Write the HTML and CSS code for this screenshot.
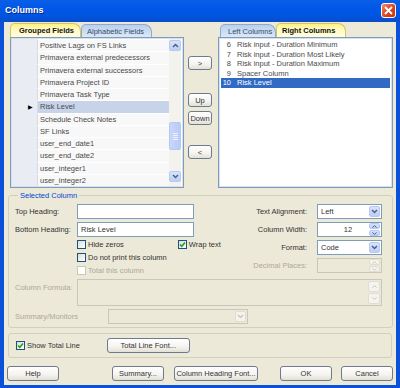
FILE: index.html
```html
<!DOCTYPE html>
<html lang="en">
  <head>
    <meta charset="UTF-8" />
    <title>Columns</title>
    <link rel="stylesheet" href="styles.css">
  </head>

  <body>
    <div class="window">
      <div class="titlebar">
        <span class="title">Columns</span>
        <span class="close">
          <svg width="9" height="9" viewBox="0 0 9 9"><path d="M1 1 L8 8 M8 1 L1 8" stroke="#fff" stroke-width="1.8" /></svg>
        </span>
      </div>

      <div class="dialog">
        <div class="top-row">
          <!-- available fields -->
          <div class="panel left-panel">
            <div class="tabs">
              <span class="tab active grouped">Grouped Fields</span>
              <span class="tab alpha">Alphabetic Fields</span>
            </div>
            <div class="listbox field-list">
              <div class="rows">
                <div class="row"><span class="mark"></span><span class="name">Positive Lags on FS Links</span></div>
                <div class="row"><span class="mark"></span><span class="name">Primavera external predecessors</span></div>
                <div class="row"><span class="mark"></span><span class="name">Primavera external successors</span></div>
                <div class="row"><span class="mark"></span><span class="name">Primavera Project ID</span></div>
                <div class="row"><span class="mark"></span><span class="name">Primavera Task Type</span></div>
                <div class="row current"><span class="mark">&#9654;</span><span class="name">Risk Level</span></div>
                <div class="row"><span class="mark"></span><span class="name">Schedule Check Notes</span></div>
                <div class="row"><span class="mark"></span><span class="name">SF Links</span></div>
                <div class="row"><span class="mark"></span><span class="name">user_end_date1</span></div>
                <div class="row"><span class="mark"></span><span class="name">user_end_date2</span></div>
                <div class="row"><span class="mark"></span><span class="name">user_integer1</span></div>
                <div class="row"><span class="mark"></span><span class="name">user_integer2</span></div>
              </div>
              <div class="vscroll">
                <span class="sbtn">
                  <svg width="7" height="5" viewBox="0 0 7 5"><path d="M1 4 L3.5 1.5 L6 4" stroke="#4d6185" stroke-width="1.5" fill="none" /></svg>
                </span>
                <span class="thumb"><i></i><i></i><i></i><i></i></span>
                <span class="sbtn">
                  <svg width="7" height="5" viewBox="0 0 7 5"><path d="M1 1 L3.5 3.5 L6 1" stroke="#4d6185" stroke-width="1.5" fill="none" /></svg>
                </span>
              </div>
            </div>
          </div>

          <!-- move buttons -->
          <div class="move-buttons">
            <button class="btn add">&gt;</button>
            <button class="btn up">Up</button>
            <button class="btn down">Down</button>
            <button class="btn remove">&lt;</button>
          </div>

          <!-- chosen columns -->
          <div class="panel right-panel">
            <div class="tabs">
              <span class="tab left-cols">Left Columns</span>
              <span class="tab active right-cols">Right Columns</span>
            </div>
            <div class="listbox column-list">
              <div class="col-row"><span class="num">6</span>Risk input - Duration Minimum</div>
              <div class="col-row"><span class="num">7</span>Risk input - Duration Most Likely</div>
              <div class="col-row"><span class="num">8</span>Risk input - Duration Maximum</div>
              <div class="col-row"><span class="num">9</span>Spacer Column</div>
              <div class="col-row selected"><span class="num">10</span>Risk Level</div>
            </div>
          </div>
        </div>

        <fieldset class="group selected-column">
          <legend>Selected Column</legend>
          <div class="fields">
            <div class="left-fields">
              <div class="field">
                <label>Top Heading:</label>
                <span class="input wide"></span>
              </div>
              <div class="field">
                <label>Bottom Heading:</label>
                <span class="input wide">Risk Level</span>
              </div>
              <div class="checks">
                <div class="check-line">
                  <span class="check"><span class="cb"></span>Hide zeros</span>
                  <span class="check wrap"><span class="cb checked"><svg width="7" height="7" viewBox="0 0 7 7"><path d="M1 3.5 L2.8 5.3 L6 1.5" stroke="#21a121" stroke-width="1.6" fill="none" /></svg></span>Wrap text</span>
                </div>
                <div class="check-line">
                  <span class="check"><span class="cb"></span>Do not print this column</span>
                </div>
                <div class="check-line">
                  <span class="check disabled"><span class="cb"></span>Total this column</span>
                </div>
              </div>
            </div>

            <div class="right-fields">
              <div class="field">
                <label>Text Alignment:</label>
                <span class="input combo">Left<span class="drop"><svg width="7" height="5" viewBox="0 0 7 5"><path d="M1 1 L3.5 3.5 L6 1" stroke="#4d6185" stroke-width="1.5" fill="none" /></svg></span></span>
              </div>
              <div class="field">
                <label>Column Width:</label>
                <span class="input combo spin"><span class="value">12</span><span class="spinner"><span class="sp"><svg width="5" height="3" viewBox="0 0 5 3"><path d="M0.5 2.6 L2.5 0.6 L4.5 2.6" stroke="#4d6185" stroke-width="1" fill="none" /></svg></span><span class="sp"><svg width="5" height="3" viewBox="0 0 5 3"><path d="M0.5 0.4 L2.5 2.4 L4.5 0.4" stroke="#4d6185" stroke-width="1" fill="none" /></svg></span></span></span>
              </div>
              <div class="field">
                <label>Format:</label>
                <span class="input combo">Code<span class="drop"><svg width="7" height="5" viewBox="0 0 7 5"><path d="M1 1 L3.5 3.5 L6 1" stroke="#4d6185" stroke-width="1.5" fill="none" /></svg></span></span>
              </div>
              <div class="field disabled">
                <label>Decimal Places:</label>
                <span class="input combo spin off"><span class="value"></span><span class="spinner"><span class="sp"><svg width="5" height="3" viewBox="0 0 5 3"><path d="M0.5 2.6 L2.5 0.6 L4.5 2.6" stroke="#c9c7ba" stroke-width="1" fill="none" /></svg></span><span class="sp"><svg width="5" height="3" viewBox="0 0 5 3"><path d="M0.5 0.4 L2.5 2.4 L4.5 0.4" stroke="#c9c7ba" stroke-width="1" fill="none" /></svg></span></span></span>
              </div>
            </div>
          </div>

          <div class="field formula disabled">
            <label>Column Formula:</label>
            <span class="input area off">
              <span class="area-scroll">
                <span class="sp"><svg width="5" height="3" viewBox="0 0 5 3"><path d="M0.5 2.6 L2.5 0.6 L4.5 2.6" stroke="#c9c7ba" stroke-width="1" fill="none" /></svg></span>
                <span class="sp"><svg width="5" height="3" viewBox="0 0 5 3"><path d="M0.5 0.4 L2.5 2.4 L4.5 0.4" stroke="#c9c7ba" stroke-width="1" fill="none" /></svg></span>
              </span>
            </span>
          </div>

          <div class="field summary disabled">
            <label>Summary/Monitors</label>
            <span class="input combo off monitors"><span class="drop"><svg width="7" height="5" viewBox="0 0 7 5"><path d="M1 1 L3.5 3.5 L6 1" stroke="#c9c7ba" stroke-width="1.5" fill="none" /></svg></span></span>
          </div>
        </fieldset>

        <div class="group total-line">
          <span class="check"><span class="cb checked"><svg width="7" height="7" viewBox="0 0 7 7"><path d="M1 3.5 L2.8 5.3 L6 1.5" stroke="#21a121" stroke-width="1.6" fill="none" /></svg></span>Show Total Line</span>
          <button class="btn total-font">Total Line Font...</button>
        </div>

        <div class="button-row">
          <button class="btn help">Help</button>
          <button class="btn summary-btn">Summary...</button>
          <button class="btn heading-font">Column Heading Font...</button>
          <button class="btn ok">OK</button>
          <button class="btn cancel">Cancel</button>
        </div>
      </div>
    </div>
  </body>
</html>
```

FILE: styles.css
```css
* {
  margin: 0;
  padding: 0;
  box-sizing: border-box;
}

body {
  font-family: "Liberation Sans", Arial, sans-serif;
  font-size: 7.5px;
  color: #333;
  background: #fff;
}

.window {
  width: 400px;
  height: 388px;
  display: flex;
  flex-direction: column;
}

/* title bar */
.titlebar {
  height: 22px;
  display: flex;
  align-items: center;
  justify-content: space-between;
  padding: 0 4px 2px 5px;
  background: linear-gradient(to bottom, #0a5fe8 0%, #0058e6 40%, #0054e0 75%, #0a4cc8 100%);
}

.title {
  color: #fff;
  font-weight: bold;
  font-size: 9px;
  text-shadow: 1px 1px 0 #0a2a8a;
}

.close {
  width: 15px;
  height: 15px;
  display: flex;
  align-items: center;
  justify-content: center;
  border: 1px solid #fff;
  border-radius: 3px;
  background: linear-gradient(135deg, #f0886a, #d8401a 60%, #c83810);
}

/* dialog body */
.dialog {
  flex: 1;
  background: #ece9d8;
  border: solid #0a50d8;
  border-width: 0 4px 3px 4px;
  padding: 1px 3px 0 3px;
  display: flex;
  flex-direction: column;
}

.top-row {
  display: flex;
  height: 165px;
  margin-left: 3px;
}

.panel {
  display: flex;
  flex-direction: column;
}

.left-panel {
  width: 174px;
}

.right-panel {
  width: 175px;
  margin-left: 6px;
}

.tabs {
  height: 14px;
  display: flex;
  align-items: flex-end;
}

.tab {
  height: 13px;
  display: flex;
  align-items: center;
  border: 1px solid #8eaad0;
  border-bottom: none;
  border-radius: 5px 8px 0 0;
  background: linear-gradient(to bottom, #b8d0ee, #dce8f6);
  color: #3a4a6a;
}

.tab.active {
  height: 14px;
  font-weight: bold;
  color: #111;
  border-color: #d8c458;
  background: linear-gradient(to bottom, #fff080, #fffac0 40%, #fffde0);
}

.grouped {
  width: 71px;
  padding-left: 8px;
}

.alpha {
  width: 71px;
  padding-left: 5px;
}

.left-cols {
  width: 56px;
  margin-left: 2px;
  padding-left: 7px;
}

.right-cols {
  width: 70px;
  padding-left: 5px;
}

.listbox {
  height: 151px;
  border: 1px solid #7f9db9;
  box-shadow: inset 0 0 0 1px #d5e1f1;
  background: #fff;
}

/* grouped field grid */
.field-list {
  display: flex;
  padding: 1px 2px 1px 1px;
}

.rows {
  flex: 1;
  display: flex;
  flex-direction: column;
  background: #e9ecf2;
}

.row {
  flex: 1;
  display: flex;
  align-items: center;
}

.mark {
  width: 25px;
  height: 100%;
  display: flex;
  align-items: center;
  justify-content: flex-end;
  padding-right: 4px;
  font-size: 6px;
  color: #000;
}

.name {
  flex: 1;
  height: 100%;
  display: flex;
  align-items: center;
  padding-left: 2px;
  background: #f8f8f8;
  border-top: 1px solid #fff;
  border-left: 1px solid #d8dbe2;
  color: #4a4a4a;
}

.row.current .name {
  background: #c6d3e8;
}

.vscroll {
  width: 12px;
  display: flex;
  flex-direction: column;
  background: #f3f2ec;
  padding-top: 1px;
}

.sbtn {
  height: 11px;
  display: flex;
  align-items: center;
  justify-content: center;
  border: 1px solid #b7c9f1;
  border-radius: 2px;
  background: linear-gradient(to bottom, #d8e3fd, #bccef7);
}

.thumb {
  height: 28px;
  margin: 71px 0 21px;
  display: flex;
  flex-direction: column;
  align-items: center;
  justify-content: center;
  gap: 1px;
  border: 1px solid #b7c9f1;
  border-radius: 2px;
  background: linear-gradient(to right, #c8d7fb, #b8cbf6);
}

.thumb i {
  width: 5px;
  height: 1px;
  background: #eef2fd;
}

/* middle buttons */
.move-buttons {
  width: 24px;
  margin-left: 4px;
  display: flex;
  flex-direction: column;
  padding-top: 33px;
}

.btn {
  font-family: inherit;
  font-size: 7.5px;
  color: #333;
  height: 15px;
  border: 1px solid #6d7b8d;
  border-radius: 3px;
  background: linear-gradient(to bottom, #ffffff, #f4f3ee 60%, #e2e0d6);
}

.move-buttons .btn {
  height: 14px;
}

.up {
  margin-top: 23px;
}

.down {
  margin-top: 4px;
}

.remove {
  margin-top: 20px;
}

/* chosen columns */
.column-list {
  padding: 2px 2px 0 2px;
}

.col-row {
  height: 9.5px;
  line-height: 9.5px;
  display: flex;
  color: #4a4a4a;
}

.num {
  width: 10px;
  text-align: right;
  margin-right: 6px;
}

.col-row.selected {
  background: #316ac5;
  color: #fff;
}

/* selected column group */
.group {
  border: 1px solid #d0d0bf;
  border-radius: 3px;
  margin: 0 1px;
}

.selected-column {
  margin-top: 3px;
  padding: 4px 10px 3px 6px;
}

legend {
  color: #0046d5;
  padding: 0 2px;
  margin-left: 3px;
  line-height: 9px;
}

.fields {
  display: flex;
  justify-content: space-between;
}

.field {
  display: flex;
  align-items: center;
  height: 15px;
}

.field + .field {
  margin-top: 3px;
}

.left-fields label {
  width: 62px;
}

.input {
  height: 15px;
  border: 1px solid #7f9db9;
  background: #fff;
  display: flex;
  align-items: center;
  padding-left: 3px;
}

.input.wide {
  width: 117px;
}

.checks {
  margin-left: 62px;
  margin-top: 1px;
}

.check-line {
  height: 13px;
  display: flex;
  align-items: center;
}

.check {
  display: flex;
  align-items: center;
}

.check.wrap {
  margin-left: 54px;
}

.cb {
  width: 9px;
  height: 9px;
  margin-right: 2px;
  border: 1px solid #1c5180;
  background: linear-gradient(135deg, #dcdcd5, #fff);
  display: flex;
  align-items: center;
  justify-content: center;
}

.disabled {
  color: #aca899;
}

.check.disabled .cb {
  border-color: #cac8bb;
  background: #fff;
}

.right-fields label {
  margin-right: 10px;
  text-align: right;
}

.right-fields .field {
  justify-content: flex-end;
}

.combo {
  width: 65px;
  justify-content: space-between;
  padding-right: 1px;
}

.drop {
  width: 11px;
  height: 11px;
  display: flex;
  align-items: center;
  justify-content: center;
  border: 1px solid #b7c9f1;
  border-radius: 2px;
  background: linear-gradient(to bottom, #d8e3fd, #bccef7);
}

.spin .value {
  flex: 1;
  text-align: center;
  padding-left: 6px;
}

.spinner {
  width: 11px;
  height: 13px;
  display: flex;
  flex-direction: column;
  gap: 1px;
}

.sp {
  flex: 1;
  display: flex;
  align-items: center;
  justify-content: center;
  border: 1px solid #b7c9f1;
  border-radius: 2px;
  background: linear-gradient(to bottom, #d8e3fd, #bccef7);
}

.off {
  background: #ece9d8;
  border-color: #c9c7ba;
}

.off .sp,
.off .drop {
  border-color: #e0ded3;
  background: #f4f3ee;
}

.formula {
  height: 27px;
  align-items: flex-start;
  margin-top: 2px;
}

.formula label {
  width: 62px;
  padding-top: 4px;
}

.area {
  width: 305px;
  height: 27px;
  justify-content: flex-end;
  align-items: stretch;
  padding: 1px;
}

.area-scroll {
  width: 12px;
  display: flex;
  flex-direction: column;
  gap: 1px;
}

.summary label {
  width: 93px;
}

.monitors {
  width: 140px;
  justify-content: flex-end;
}

/* total line group */
.total-line {
  margin-top: 5px;
  height: 25px;
  display: flex;
  align-items: center;
  padding-left: 7px;
}

.total-font {
  width: 83px;
  margin-left: 27px;
}

/* bottom buttons */
.button-row {
  margin-top: 8px;
  display: flex;
}

.help,
.summary-btn,
.ok,
.cancel {
  width: 52px;
}

.summary-btn {
  margin-left: 53px;
}

.heading-font {
  width: 84px;
  margin-left: 10px;
}

.ok {
  margin-left: 22px;
}

.cancel {
  margin-left: 9px;
}
```
